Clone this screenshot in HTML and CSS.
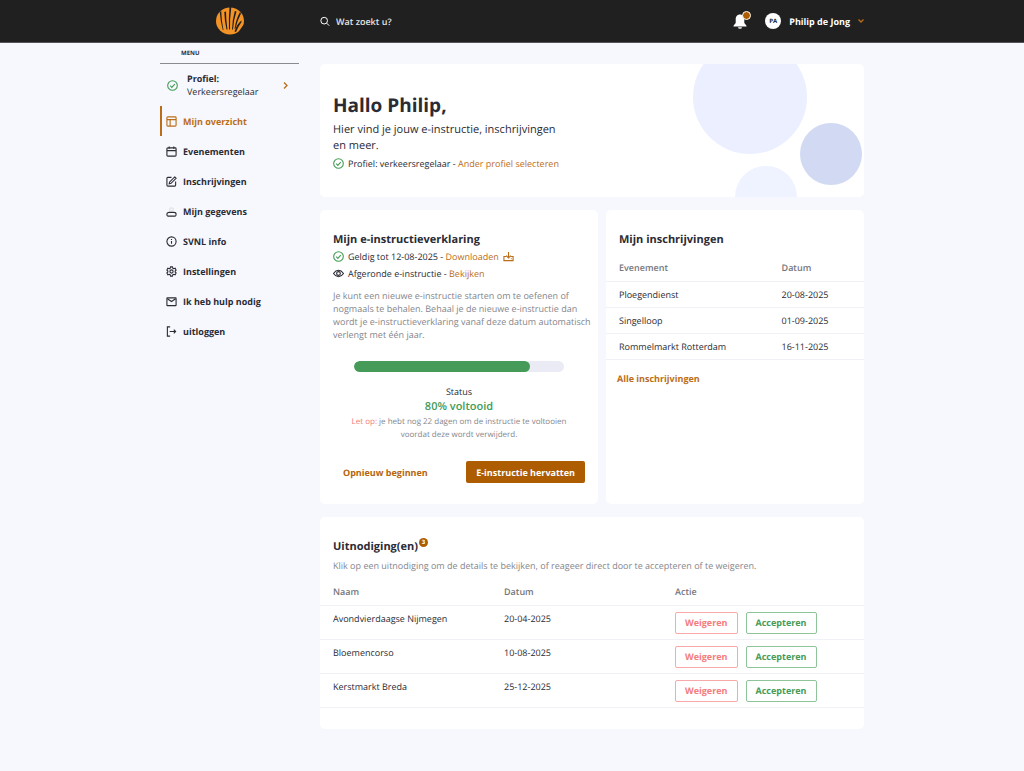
FILE: index.html
```html
<!DOCTYPE html>
<html lang="nl">
<head>
    <meta charset="UTF-8">
    <meta name="viewport" content="width=device-width, initial-scale=1.0">
    <title>Mijn overzicht</title>
    <link rel="stylesheet" href="styles.css">
</head>
<body>
    <header class="topbar">
        <div class="topbar-inner">
            <a href="#" class="logo" aria-label="Home">
                <svg viewBox="0 0 28 28" width="28" height="28">
                    <ellipse cx="14" cy="14" rx="14" ry="13.500" fill="#f39325"/>
                    <g fill="#202020">
                        <path d="M3.800 5L5.200 4Q5.500 14 7.500 23L6.800 23Q4.300 14 3.800 5Z"/>
                        <path d="M8.300 5L10 4.500Q10 13 11.500 22.500L10.500 22.500Q8.500 14 8.300 5Z"/>
                        <path d="M13.500 0H15.300Q13.700 12 14 22.500H13Q12.500 11 13.500 0Z"/>
                        <path d="M18.800 4L20.500 4.500Q17.500 13 17 22.500H16Q16.200 13 18.800 4Z"/>
                        <path d="M24 5L25 6.500Q21.500 13 19.500 21.500L18.500 22Q20 12 24 5Z"/>
                        <path d="M25.500 13.500Q21.500 16 18.500 24.500L20 25Q22 20 25.500 15Z"/>
                        <path d="M28 17.500Q25.500 20 22 26L28 27Z"/>
                    </g>
                </svg>
            </a>
            <div class="topbar-main">
                <form class="search">
                    <label for="search" aria-label="Zoeken">
                        <svg class="icon" viewBox="0 0 24 24"><circle cx="10" cy="10" r="8"/><path d="M16 16l6 6"/></svg>
                    </label>
                    <input type="search" id="search" placeholder="Wat zoekt u?">
                </form>
                <div class="account">
                    <button type="button" class="bell" aria-label="Meldingen">
                        <svg viewBox="0 0 14 15" width="14" height="15" fill="#fff">
                            <path d="M7 0.500C4 0.500 2.700 2.800 2.700 5.500V9L0.500 11.800V12.500H13.500V11.800L11.300 9V5.500C11.300 2.800 10 0.500 7 0.500Z"/>
                            <path d="M5 13.200H9A2 1.600 0 0 1 5 13.200Z"/>
                        </svg>
                        <span class="dot"></span>
                    </button>
                    <button type="button" class="user">
                        <span class="avatar">PA</span>
                        <span>Philip de Jong</span>
                        <svg class="chevron" viewBox="0 0 6 4" width="6" height="4"><path d="M0.500 0.500L3 3L5.500 0.500"/></svg>
                    </button>
                </div>
            </div>
        </div>
    </header>

    <div class="container">
        <nav class="sidebar">
            <div class="menu-title">MENU</div>
            <button type="button" class="profile">
                <svg class="icon icon-check" viewBox="0 0 24 24"><circle cx="12" cy="12" r="10.500"/><path d="M7 12.500l3.500 3.500l6.500-7"/></svg>
                <span class="profile-text"><strong>Profiel:</strong><br>Verkeersregelaar</span>
                <svg class="chevron" viewBox="0 0 5 7" width="5" height="7"><path d="M1 0.500L4 3.500L1 6.500"/></svg>
            </button>
            <ul class="menu">
                <li><a href="#" class="active">
                    <svg class="icon" viewBox="0 0 24 24"><rect x="2" y="2" width="20" height="20" rx="2"/><path d="M2 8h20M9 8v14"/></svg>
                    Mijn overzicht</a></li>
                <li><a href="#">
                    <svg class="icon" viewBox="0 0 24 24"><rect x="2" y="4" width="20" height="18" rx="2"/><path d="M2 10h20M7 1v5M17 1v5"/></svg>
                    Evenementen</a></li>
                <li><a href="#">
                    <svg class="icon" viewBox="0 0 24 24"><path d="M12 3H4a2 2 0 0 0-2 2v15a2 2 0 0 0 2 2h15a2 2 0 0 0 2-2v-8"/><path d="M19 2l3 3L11 16l-4 1l1-4Z"/></svg>
                    Inschrijvingen</a></li>
                <li><a href="#">
                    <svg class="icon" viewBox="0 0 24 24"><path d="M7 14h10q5 0 5 4t-2 4H4q-2 0-2-4t5-4Z"/><path d="M8 9q4 3 8 0V6q-4-4-8 0Z" stroke-opacity="0.100"/></svg>
                    Mijn gegevens</a></li>
                <li><a href="#">
                    <svg class="icon" viewBox="0 0 24 24"><circle cx="12" cy="12" r="10"/><path d="M12 11v6M12 6.500v2"/></svg>
                    SVNL info</a></li>
                <li><a href="#">
                    <svg class="icon" viewBox="0 0 24 24"><path d="M10 2h4l1 3l2 1l3-1l2 4l-2 2v2l2 2l-2 4l-3-1l-2 1l-1 3h-4l-1-3l-2-1l-3 1l-2-4l2-2v-2l-2-2l2-4l3 1l2-1Z"/><circle cx="12" cy="12" r="3.500"/></svg>
                    Instellingen</a></li>
                <li><a href="#">
                    <svg class="icon" viewBox="0 0 24 24"><rect x="2" y="4" width="20" height="17" rx="1"/><path d="M3 6l9 6l9-6"/></svg>
                    Ik heb hulp nodig</a></li>
                <li><a href="#">
                    <svg class="icon" viewBox="0 0 24 24"><path d="M9 2H3v20h6M8 12h13M17 8l4 4l-4 4"/></svg>
                    uitloggen</a></li>
            </ul>
        </nav>

        <main>
            <section class="card hero">
                <h1>Hallo Philip,</h1>
                <p class="intro">Hier vind je jouw e-instructie, inschrijvingen en meer.</p>
                <p class="line">
                    <svg class="icon icon-check" viewBox="0 0 24 24"><circle cx="12" cy="12" r="10.500"/><path d="M7 12.500l3.500 3.500l6.500-7"/></svg>
                    <span>Profiel: verkeersregelaar - <a href="#">Ander profiel selecteren</a></span>
                </p>
                <svg class="circles" viewBox="0 0 171 133" width="171" height="133">
                    <circle cx="57" cy="33" r="57" fill="#ebefff"/>
                    <circle cx="73" cy="133" r="31" fill="#eff2ff"/>
                    <circle cx="138" cy="90" r="31" fill="#d2daf3"/>
                </svg>
            </section>

            <div class="columns">
                <section class="card">
                    <h2>Mijn e-instructieverklaring</h2>
                    <p class="line">
                        <svg class="icon icon-check" viewBox="0 0 24 24"><circle cx="12" cy="12" r="10.500"/><path d="M7 12.500l3.500 3.500l6.500-7"/></svg>
                        <span>Geldig tot 12-08-2025 - <a href="#">Downloaden</a></span>
                        <svg class="icon icon-download" viewBox="0 0 24 24"><path d="M7 12H2v9h20v-9h-5M12 2v13M7 10l5 5l5-5M17 17h2"/></svg>
                    </p>
                    <p class="line">
                        <svg class="icon" viewBox="0 0 24 24"><path d="M1 12Q6 5 12 5t11 7Q18 19 12 19T1 12Z"/><circle cx="12" cy="12" r="4"/></svg>
                        <span>Afgeronde e-instructie - <a href="#">Bekijken</a></span>
                    </p>
                    <p class="muted description">Je kunt een nieuwe e-instructie starten om te oefenen of nogmaals te behalen. Behaal je de nieuwe e-instructie dan wordt je e-instructieverklaring vanaf deze datum automatisch verlengt met één jaar.</p>

                    <div class="progress" role="progressbar" aria-label="Status" aria-valuenow="80" aria-valuemin="0" aria-valuemax="100">
                        <div class="progress-level" style="width: 84%"></div>
                    </div>
                    <div class="status">
                        <p>Status</p>
                        <p class="status-value">80% voltooid</p>
                        <p class="status-note"><span class="warning">Let op:</span> je hebt nog 22 dagen om de instructie te voltooien voordat deze wordt verwijderd.</p>
                    </div>
                    <div class="actions">
                        <button type="button" class="btn btn-text">Opnieuw beginnen</button>
                        <button type="button" class="btn btn-primary">E-instructie hervatten</button>
                    </div>
                </section>

                <section class="card">
                    <h2>Mijn inschrijvingen</h2>
                    <table class="registrations">
                        <thead>
                            <tr><th>Evenement</th><th>Datum</th></tr>
                        </thead>
                        <tbody>
                            <tr><td>Ploegendienst</td><td>20-08-2025</td></tr>
                            <tr><td>Singelloop</td><td>01-09-2025</td></tr>
                            <tr><td>Rommelmarkt Rotterdam</td><td>16-11-2025</td></tr>
                        </tbody>
                    </table>
                    <a href="#" class="all-link">Alle inschrijvingen</a>
                </section>
            </div>

            <section class="card">
                <h2>Uitnodiging(en)<span class="badge">3</span></h2>
                <p class="muted hint">Klik op een uitnodiging om de details te bekijken, of reageer direct door te accepteren of te weigeren.</p>
                <table class="invitations">
                    <thead>
                        <tr><th>Naam</th><th>Datum</th><th>Actie</th></tr>
                    </thead>
                    <tbody>
                        <tr>
                            <td>Avondvierdaagse Nijmegen</td>
                            <td>20-04-2025</td>
                            <td class="buttons"><button type="button" class="btn btn-decline">Weigeren</button><button type="button" class="btn btn-accept">Accepteren</button></td>
                        </tr>
                        <tr>
                            <td>Bloemencorso</td>
                            <td>10-08-2025</td>
                            <td class="buttons"><button type="button" class="btn btn-decline">Weigeren</button><button type="button" class="btn btn-accept">Accepteren</button></td>
                        </tr>
                        <tr>
                            <td>Kerstmarkt Breda</td>
                            <td>25-12-2025</td>
                            <td class="buttons"><button type="button" class="btn btn-decline">Weigeren</button><button type="button" class="btn btn-accept">Accepteren</button></td>
                        </tr>
                    </tbody>
                </table>
            </section>
        </main>
    </div>
</body>
</html>
```
FILE: styles.css
```css
* {
    box-sizing: border-box;
}

body {
    font-family: 'Open Sans', 'Noto Sans', sans-serif;
    font-size: 9px;
    line-height: 13px;
    text-rendering: geometricPrecision;
    margin: 0;
    background-color: #f6f8fd;
    color: #2a2b35;
}

h1, h2, p, ul {
    margin: 0;
    padding: 0;
}

a {
    color: #bb6d17;
    text-decoration: none;
}

button, input {
    font: inherit;
    color: inherit;
    background: none;
    border: none;
    padding: 0;
    text-rendering: inherit;
}

button {
    cursor: pointer;
}

.icon {
    width: 11px;
    height: 11px;
    flex: none;
    fill: none;
    stroke: currentColor;
    stroke-width: 2.4;
}

.icon-check {
    color: #459b57;
}

.chevron {
    fill: none;
    stroke: #bb6d17;
    stroke-width: 1.3;
}

/* Top bar */
.topbar {
    background-color: #202020;
    border-bottom: 1px solid #55565a;
    color: white;
}

.topbar-inner {
    max-width: 704px;
    height: 42px;
    margin: 0 auto;
    display: grid;
    grid-template-columns: 139px 1fr;
    column-gap: 21px;
    align-items: center;
}

.logo {
    display: flex;
    justify-content: center;
}

.topbar-main, .account, .user, .search {
    display: flex;
    align-items: center;
}

.topbar-main {
    justify-content: space-between;
}

.search {
    gap: 6px;
    font-weight: 600;
}

.search label {
    display: flex;
}

.search .icon {
    width: 10px;
}

.search input {
    width: 160px;
    outline: none;
}

.search input::placeholder {
    color: #e4e4e4;
    opacity: 1;
}

.account {
    gap: 18px;
}

.bell {
    position: relative;
    height: 15px;
}

.dot {
    position: absolute;
    top: -3px;
    right: -4px;
    width: 9px;
    height: 9px;
    border: 1px solid white;
    border-radius: 50%;
    background-color: #ad5c00;
}

.user {
    gap: 8px;
    font-weight: 700;
}

.avatar {
    width: 16px;
    height: 16px;
    border-radius: 50%;
    background-color: white;
    color: #202020;
    font-size: 6px;
    line-height: 16px;
    text-align: center;
}

/* Layout */
.container {
    max-width: 704px;
    margin: 0 auto;
    display: grid;
    grid-template-columns: 139px 1fr;
    column-gap: 21px;
}

main {
    display: flex;
    flex-direction: column;
    gap: 13px;
    padding: 21px 0 43px;
}

/* Sidebar */
.menu-title {
    padding: 4px 21px 3px;
    border-bottom: 1px solid #8a8b91;
    font-size: 6px;
    font-weight: 700;
}

.profile {
    display: flex;
    align-items: center;
    width: 100%;
    gap: 9px;
    height: 42px;
    padding: 0 11px 0 7px;
    text-align: left;
}

.profile-text {
    flex: 1;
}

.menu {
    list-style: none;
}

.menu a {
    display: flex;
    align-items: center;
    gap: 6px;
    height: 30px;
    padding-left: 4px;
    border-left: 2px solid transparent;
    color: #2a2b35;
    font-weight: 700;
}

.menu a.active {
    color: #bb6d17;
    border-left-color: #bb6d17;
}

/* Cards */
.card {
    background-color: white;
    border-radius: 5px;
    padding: 21px 13px;
}

h2 {
    font-size: 11px;
    line-height: 17px;
}

.line {
    display: flex;
    align-items: center;
    gap: 4px;
    line-height: 17px;
}

.icon-download {
    color: #bb6d17;
}

.muted {
    color: #85868c;
}

.hero {
    position: relative;
    height: 133px;
    padding-top: 27px;
    overflow: hidden;
}

h1 {
    font-size: 19px;
    line-height: 28px;
}

.intro {
    max-width: 230px;
    margin: 3px 0 1px;
    font-size: 11px;
    line-height: 16px;
}

.circles {
    position: absolute;
    top: 0;
    right: 0;
}

.columns {
    display: grid;
    grid-template-columns: 278fr 258fr;
    gap: 8px;
}

.description {
    margin: 7px -8px 20px 0;
}

.progress {
    height: 11px;
    margin: 0 21px;
    border-radius: 6px;
    background-color: #eaebf5;
    overflow: hidden;
}

.progress-level {
    height: 100%;
    border-radius: 6px;
    background-color: #459b57;
}

.status {
    margin: 13px 13px 20px;
    text-align: center;
}

.status-value {
    color: #459b57;
    font-size: 11px;
    line-height: 17px;
    font-weight: 600;
}

.status-note {
    color: #85868c;
    font-size: 8px;
}

.warning {
    color: #f47c7c;
}

.actions {
    display: flex;
    justify-content: space-between;
}

.btn {
    height: 22px;
    padding: 0 9px;
    border: 1px solid transparent;
    border-radius: 2px;
    font-weight: 700;
}

.btn-text {
    color: #b4650d;
}

.btn-primary {
    background-color: #ad5c00;
    color: white;
}

.btn-decline {
    border-color: #f7a8a8;
    color: #f47c7c;
}

.btn-accept {
    border-color: #8fc49a;
    color: #459b57;
    margin-left: 8px;
}

/* Tables */
table {
    border-collapse: collapse;
    table-layout: fixed;
    width: calc(100% + 26px);
    margin: 0 -13px;
}

th, td {
    padding: 0 0 0 13px;
    border-bottom: 1px solid #f0f1f6;
    text-align: left;
}

th {
    height: 26px;
    color: #75767d;
    font-weight: 600;
}

.registrations {
    margin-top: 7px;
}

.registrations td {
    height: 26px;
}

.registrations th:first-child {
    width: 63%;
}

.all-link {
    display: block;
    margin: 12px -2px;
    font-weight: 700;
}

.badge {
    position: absolute;
    width: 9px;
    height: 9px;
    margin-left: 1px;
    border-radius: 50%;
    background-color: #ad5c00;
    color: white;
    font-size: 6px;
    line-height: 9px;
    text-align: center;
}

.hint {
    margin-top: 4px;
}

.invitations {
    margin-top: 7px;
}

.invitations th:nth-child(-n+2) {
    width: 171px;
}

.invitations td {
    height: 34px;
    padding-top: 6px;
    vertical-align: top;
}

@media (max-width: 720px) {
    .container, .topbar-inner {
        padding: 0 10px;
    }

    .container, .columns {
        grid-template-columns: 1fr;
    }
}
```
